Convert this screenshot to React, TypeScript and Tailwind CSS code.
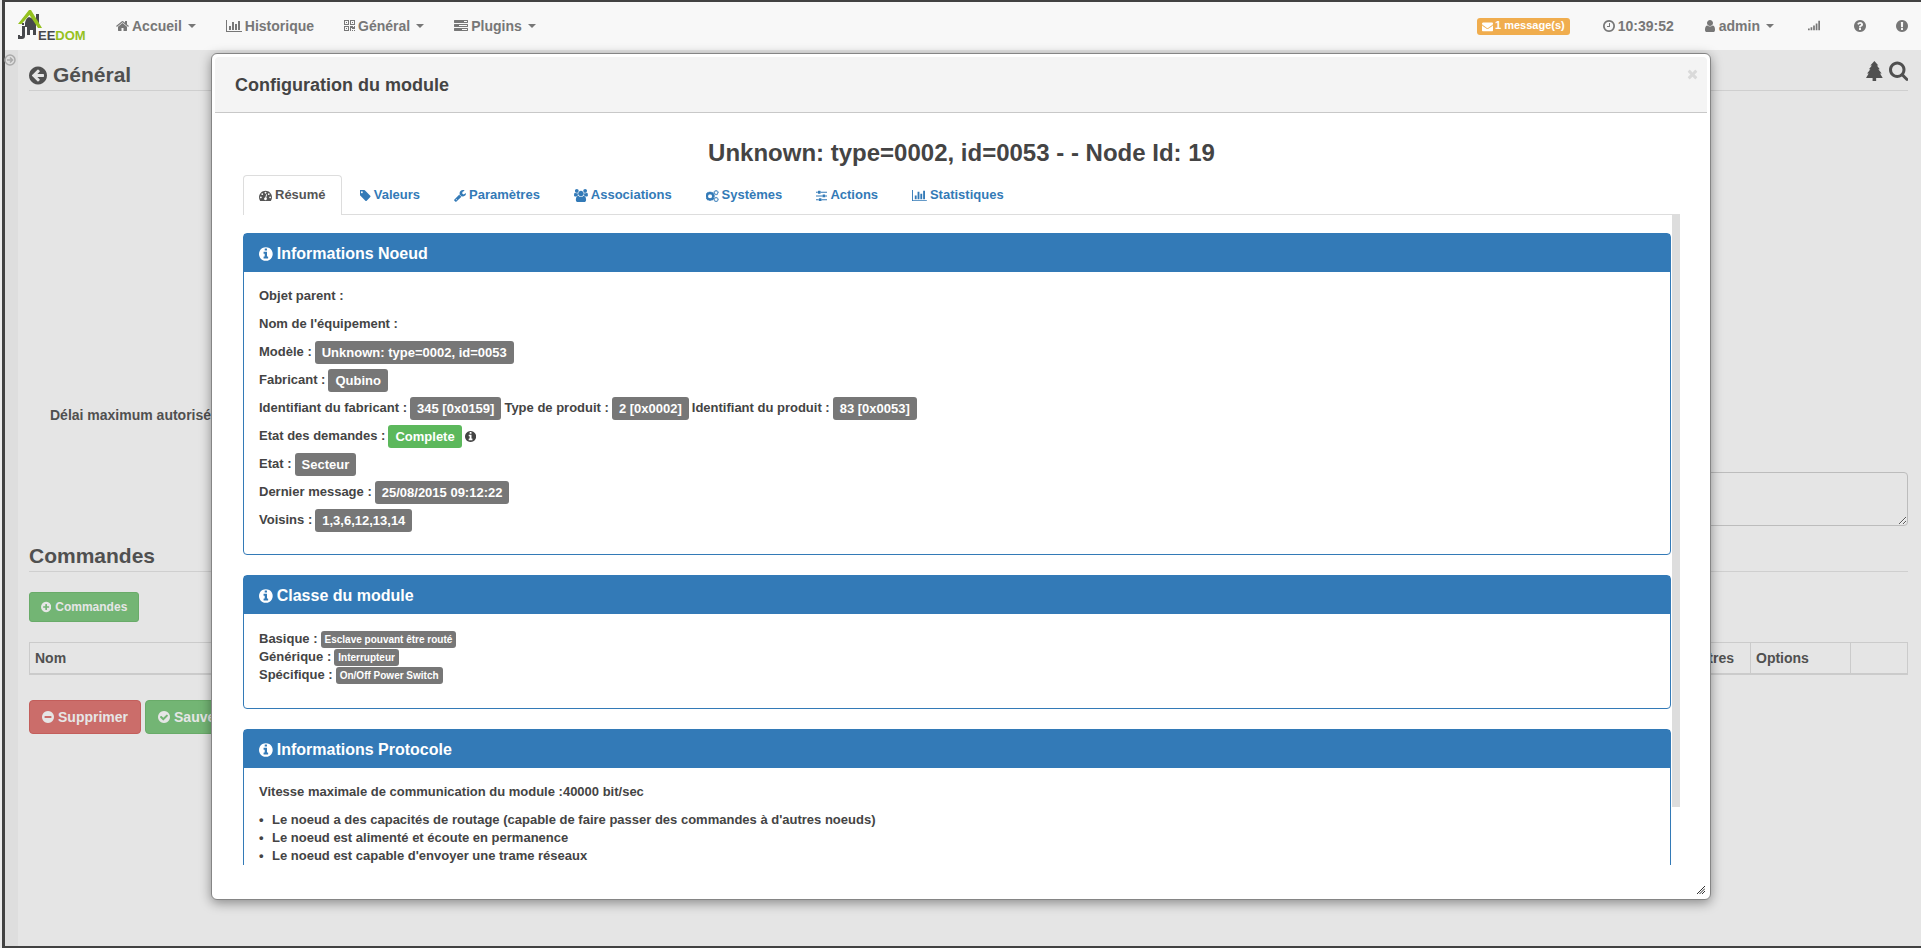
import type { ReactNode } from "react";

const DISC =
  "M1664 896q0 209-103 385.5t-279.5 279.5-385.5 103-385.5-103-279.5-279.5-103-385.5 103-385.5 279.5-279.5 385.5-103 385.5 103 279.5 279.5 103 385.5z";

type IconDef = { w: number; x?: number; d: string };

const ICONS = {
  home: { w: 1664, x: 64, d: "M1472 992v480q0 26-19 45t-45 19h-384v-384h-256v384h-384q-26 0-45-19t-19-45v-480q0-1 .5-3t.5-3l575-474 575 474q1 2 1 6zm223-69l-62 74q-8 9-21 11h-3q-13 0-21-7l-692-577-692 577q-12 8-24 7-13-2-21-11l-62-74q-8-10-7-23.5t11-21.5l719-599q32-26 76-26t76 26l244 204v-195q0-14 9-23t23-9h192q14 0 23 9t9 23v408l219 182q10 8 11 21.5t-7 23.5z" },
  chart: { w: 2048, d: "M640 896v512h-256v-512h256zm384-512v1024h-256v-1024h256zm1024 1152v128h-2048v-1536h128v1408h1920zm-640-896v768h-256v-768h256zm384-384v1152h-256v-1152h256z" },
  qrcode: { w: 1408, d: "M384 1152v128h-128v-128h128zm0-768v128h-128v-128h128zm768 0v128h-128v-128h128zm-1024 1023h384v-383h-384v383zm0-767h384v-384h-384v384zm768 0h384v-384h-384v384zm-256 256v640h-640v-640h640zm512 512v128h-128v-128h128zm256 0v128h-128v-128h128zm0-512v384h-384v-128h-128v384h-128v-640h384v128h128v-128h128zm-768-768v640h-640v-640h640zm768 0v640h-640v-640h640z" },
  tasks: { w: 1792, d: "M1024 1408h640v-128h-640v128zm-384-512h1024v-128h-1024v128zm640-512h384v-128h-384v128zm512 832v256q0 26-19 45t-45 19h-1664q-26 0-45-19t-19-45v-256q0-26 19-45t45-19h1664q26 0 45 19t19 45zm0-512v256q0 26-19 45t-45 19h-1664q-26 0-45-19t-19-45v-256q0-26 19-45t45-19h1664q26 0 45 19t19 45zm0-512v256q0 26-19 45t-45 19h-1664q-26 0-45-19t-19-45v-256q0-26 19-45t45-19h1664q26 0 45 19t19 45z" },
  envelope: { w: 1792, d: "M1792 710v794q0 66-47 113t-113 47h-1472q-66 0-113-47t-47-113v-794q44 49 101 87 362 246 497 345 57 42 92.5 65.5t94.5 48 110 24.5h2q51 0 110-24.5t94.5-48 92.5-65.5q170-123 498-345 57-39 100-87zm0-294q0 79-49 151t-122 123q-376 261-468 325-10 7-42.5 31t-54 38.5-52 32.5-57.5 27-50 9h-2q-23 0-50-9t-57.5-27-52-32.5-54-38.5-42.5-31q-91-64-262-182.5t-205-142.5q-62-42-117-115.5t-55-136.5q0-78 41.5-130t118.5-52h1472q65 0 112.5 47t47.5 113z" },
  clock: { w: 1536, x: 128, d: "M1024 544v448q0 14-9 23t-23 9h-320q-14 0-23-9t-9-23v-64q0-14 9-23t23-9h224v-352q0-14 9-23t23-9h64q14 0 23 9t9 23zm416 352q0-148-73-273t-198-198-273-73-273 73-198 198-73 273 73 273 198 198 273 73 273-73 198-198 73-273zm224 0q0 209-103 385.5t-279.5 279.5-385.5 103-385.5-103-279.5-279.5-103-385.5 103-385.5 279.5-279.5 385.5-103 385.5 103 279.5 279.5 103 385.5z" },
  user: { w: 1536, x: 128, d: "M1536 1399q0 109-62.5 187t-150.5 78h-854q-88 0-150.5-78t-62.5-187q0-85 8.5-160.5t31.5-152 58.5-131 94-89 134.5-34.5q131 128 313 128t313-128q76 0 134.5 34.5t94 89 58.5 131 31.5 152 8.5 160.5zm-256-887q0 159-112.5 271.5t-271.5 112.5-271.5-112.5-112.5-271.5 112.5-271.5 271.5-112.5 271.5 112.5 112.5 271.5z" },
  signal: { w: 1792, d: "M0 1280h256v256h-256zM384 1088h256v448h-256zM768 832h256v704h-256zM1152 512h256v1024h-256zM1536 128h256v1408h-256z" },
  question: { w: 1536, x: 128, d: "M1024 1376v-192q0-14-9-23t-23-9h-192q-14 0-23 9t-9 23v192q0 14 9 23t23 9h192q14 0 23-9t9-23zm256-672q0-88-55.5-163t-138.5-116-170-41q-243 0-371 213-15 24 8 42l132 100q7 6 19 6 16 0 25-12 53-68 86-92 34-24 86-24 48 0 85.5 26t37.5 59q0 38-20 61t-68 45q-63 28-115.5 86.5t-52.5 125.5v36q0 14 9 23t23 9h192q14 0 23-9t9-23q0-19 21.5-49.5t54.5-49.5q32-18 49-28.5t46-35 44.5-48 28-60.5 12.5-81z" + DISC },
  exclamation: { w: 1536, x: 128, d: "M1024 1375v-190q0-14-9-23.5t-22-9.5h-192q-13 0-23 10t-10 23v190q0 13 10 23t23 10h192q13 0 22-9.5t9-23.5zm-2-344l18-621q0-12-10-18-10-8-24-8h-220q-14 0-24 8-10 6-10 18l17 621q0 10 10 17.5t24 7.5h185q14 0 23.5-7.5t10.5-17.5z" + DISC },
  info: { w: 1536, x: 128, d: "M1152 1376v-160q0-14-9-23t-23-9h-96v-512q0-14-9-23t-23-9h-320q-14 0-23 9t-9 23v160q0 14 9 23t23 9h96v320h-96q-14 0-23 9t-9 23v160q0 14 9 23t23 9h448q14 0 23-9t9-23zm-128-896v-160q0-14-9-23t-23-9h-192q-14 0-23 9t-9 23v160q0 14 9 23t23 9h192q14 0 23-9t9-23z" + DISC },
  back: { w: 1536, x: 128, d: "M1408 960v-128q0-26-19-45t-45-19h-502l189-189q19-19 19-45t-19-45l-91-91q-18-18-45-18t-45 18l-362 362-91 91q-18 18-18 45t18 45l91 91 362 362q18 18 45 18t45-18l91-91q18-18 18-45t-18-45l-189-189h502q26 0 45-19t19-45z" + DISC },
  plus: { w: 1536, x: 128, d: "M1344 960v-128q0-26-19-45t-45-19h-256v-256q0-26-19-45t-45-19h-128q-26 0-45 19t-19 45v256h-256q-26 0-45 19t-19 45v128q0 26 19 45t45 19h256v256q0 26 19 45t45 19h128q26 0 45-19t19-45v-256h256q26 0 45-19t19-45z" + DISC },
  minus: { w: 1536, x: 128, d: "M1344 960v-128q0-26-19-45t-45-19h-768q-26 0-45 19t-19 45v128q0 26 19 45t45 19h768q26 0 45-19t19-45z" + DISC },
  check: { w: 1536, x: 128, d: "M1412 734q0-28-18-46l-91-90q-19-19-45-19t-45 19l-408 407-226-226q-19-19-45-19t-45 19l-91 90q-18 18-18 46 0 27 18 45l362 362q19 19 45 19 27 0 46-19l543-543q18-18 18-45z" + DISC },
  times: { w: 1408, x: 192, d: "M1490 1322q0 40-28 68l-136 136q-28 28-68 28t-68-28l-294-294-294 294q-28 28-68 28t-68-28l-136-136q-28-28-28-68t28-68l294-294-294-294q-28-28-28-68t28-68l136-136q28-28 68-28t68 28l294 294 294-294q28-28 68-28t68 28l136 136q28 28 28 68t-28 68l-294 294 294 294q28 28 28 68z" },
  search: { w: 1664, x: 64, d: "M1216 832q0-185-131.5-316.5t-316.5-131.5-316.5 131.5-131.5 316.5 131.5 316.5 316.5 131.5 316.5-131.5 131.5-316.5zm512 832q0 52-38 90t-90 38q-54 0-90-38l-343-342q-179 124-399 124-143 0-273.5-55.5t-225-150-150-225-55.5-273.5 55.5-273.5 150-225 225-150 273.5-55.5 273.5 55.5 225 150 150 225 55.5 273.5q0 220-124 399l343 343q37 37 37 90z" },
  tree: { w: 1500, d: "M750 0l360 400h-140l270 340h-130l290 380h-140l240 400h-590v272h-320v-272h-590l240-400h-140l290-380h-130l270-340h-140z" },
  gauge: { w: 1792, d: "M384 1152q0-53-37.5-90.5t-90.5-37.5-90.5 37.5-37.5 90.5 37.5 90.5 90.5 37.5 90.5-37.5 37.5-90.5zm192-448q0-53-37.5-90.5t-90.5-37.5-90.5 37.5-37.5 90.5 37.5 90.5 90.5 37.5 90.5-37.5 37.5-90.5zm428 481l101-382q6-26-7.5-48.5t-38.5-29.5-48 6.5-30 39.5l-101 382q-60 5-107 43.5t-63 98.5q-20 77 20 146t117 89 146-20 89-117q16-60-6-117t-72-91zm660-33q0-53-37.5-90.5t-90.5-37.5-90.5 37.5-37.5 90.5 37.5 90.5 90.5 37.5 90.5-37.5 37.5-90.5zm-640-640q0-53-37.5-90.5t-90.5-37.5-90.5 37.5-37.5 90.5 37.5 90.5 90.5 37.5 90.5-37.5 37.5-90.5zm448 192q0-53-37.5-90.5t-90.5-37.5-90.5 37.5-37.5 90.5 37.5 90.5 90.5 37.5 90.5-37.5 37.5-90.5zm320 448q0 261-141 483-19 29-54 29h-1402q-35 0-54-29-141-221-141-483 0-182 71-348t191-286 286-191 348-71 348 71 286 191 191 286 71 348z" },
  tag: { w: 1536, x: 192, d: "M576 448q0-53-37.5-90.5t-90.5-37.5-90.5 37.5-37.5 90.5 37.5 90.5 90.5 37.5 90.5-37.5 37.5-90.5zm1067 576q0 53-37 90l-491 492q-39 37-91 37-53 0-90-37l-715-716q-38-37-64.5-101t-26.5-117v-416q0-52 38-90t90-38h416q53 0 117 26.5t102 64.5l715 714q37 39 37 91z" },
  wrench: { w: 1664, x: 64, d: "M448 1472q0-26-19-45t-45-19-45 19-19 45 19 45 45 19 45-19 19-45zm644-420l-682 682q-37 37-90 37-52 0-91-37l-106-108q-38-36-38-90 0-53 38-91l681-681q39 98 114.5 173.5t173.5 114.5zm634-435q0 39-23 106-47 134-164.5 217.5t-258.5 83.5q-185 0-316.5-131.5t-131.5-316.5 131.5-316.5 316.5-131.5q58 0 121.5 16.5t107.5 46.5q16 11 16 28t-16 28l-293 169v224l193 107q5-3 79-48.5t135.5-81 70.5-35.5q15 0 23.5 10t8.5 25z" },
  users: { w: 1920, d: "M593 896q-162 5-265 128h-134q-82 0-138-40.5t-56-118.5q0-353 124-353 6 0 43.5 21t97.5 42.5 119 21.5q67 0 133-23-5 37-5 66 0 139 81 256zm1071 637q0 120-73 189.5t-194 69.5h-874q-121 0-194-69.5t-73-189.5q0-53 3.5-103.5t14-109 26.5-108.5 43-97.5 62-81 85.5-53.5 111.5-20q10 0 43 21.5t73 48 107 48 135 21.5 135-21.5 107-48 73-48 43-21.5q61 0 111.5 20t85.5 53.5 62 81 43 97.5 26.5 108.5 14 109 3.5 103.5zm-1024-1277q0 106-75 181t-181 75-181-75-75-181 75-181 181-75 181 75 75 181zm704 384q0 159-112.5 271.5t-271.5 112.5-271.5-112.5-112.5-271.5 112.5-271.5 271.5-112.5 271.5 112.5 112.5 271.5zm576 225q0 78-56 118.5t-138 40.5h-134q-103-123-265-128 81-117 81-256 0-29-5-66 66 23 133 23 59 0 119-21.5t97.5-42.5 43.5-21q124 0 124 353zm-128-609q0 106-75 181t-181 75-181-75-75-181 75-181 181-75 181 75 75 181z" },
  sliders: { w: 1536, d: "M352 1408v128h-352v-128h352zm352-128q26 0 45 19t19 45v256q0 26-19 45t-45 19h-256q-26 0-45-19t-19-45v-256q0-26 19-45t45-19h256zm160-384v128h-864v-128h864zm-640-512v128h-224v-128h224zm1312 1024v128h-736v-128h736zm-960-1152q26 0 45 19t19 45v256q0 26-19 45t-45 19h-256q-26 0-45-19t-19-45v-256q0-26 19-45t45-19h256zm640 512q26 0 45 19t19 45v256q0 26-19 45t-45 19h-256q-26 0-45-19t-19-45v-256q0-26 19-45t45-19h256zm320 128v128h-224v-128h224zm0-512v128h-864v-128h864z" },
} satisfies Record<string, IconDef>;

type IconName = keyof typeof ICONS;

function Icon({ name, className = "h-[14px]" }: { name: IconName; className?: string }) {
  const icon: IconDef = ICONS[name];
  return (
    <svg aria-hidden="true" viewBox={`${icon.x ?? 0} 0 ${icon.w} 1792`} className={`w-auto shrink-0 ${className}`} fill="currentColor" fillRule="evenodd">
      <path d={icon.d} />
    </svg>
  );
}

const GEAR =
  "M-1.4-8h2.8l.4 2.1 1.4.6 1.8-1.2 2 2-1.2 1.8.6 1.4 2.1.4v2.8l-2.1.4-.6 1.4 1.2 1.8-2 2-1.8-1.2-1.4.6-.4 2.1h-2.8l-.4-2.1-1.4-.6-1.8 1.2-2-2 1.2-1.8-.6-1.4-2.1-.4v-2.8l2.1-.4.6-1.4-1.2-1.8 2-2 1.800 1.200 1.400-.6z";

function Gears() {
  return (
    <svg aria-hidden="true" viewBox="0 0 30 28" className="h-3 w-auto shrink-0">
      <g fill="none" stroke="currentColor">
        <path d={GEAR} transform="translate(9.5 14)" strokeWidth="4.4" />
        <g strokeWidth="4">
          <path d={GEAR} transform="translate(23.5 6) scale(.58)" />
          <path d={GEAR} transform="translate(23.5 22) scale(.58)" />
        </g>
      </g>
    </svg>
  );
}

function Logo() {
  return (
    <svg viewBox="0 0 70 32" className="h-8 w-[70px]" role="img" aria-label="Jeedom">
      <path d="M18 4h3v9h-3z" fill="#47484c" />
      <path d="M11 7q4 1 7 6v12h-3v-5h-3v5h-3v-8h-2v-4q1-5 4-6z" fill="#47484c" />
      <path d="M4 13h2v2h-2zM4 16h3v10q0 3-3 3h-4v-4h2v1h2z" fill="#47484c" />
      <path d="M11 0h2l11 18h-4l-8.500-13-8 9h-3.500z" fill="#95c11f" />
      <text x="20" y="30" fontSize="13" fontWeight="700" fontFamily="'Liberation Sans', Arial, sans-serif">
        <tspan fill="#47484c">EE</tspan>
        <tspan fill="#95c11f">DOM</tspan>
      </text>
    </svg>
  );
}

function Caret() {
  return <span className="ml-1.5 border-x-4 border-t-4 border-x-transparent border-t-current" />;
}

function NavItem({ icon, label, caret }: { icon: IconName; label: string; caret?: boolean }) {
  return (
    <a href="#" className="flex h-full items-center px-[15px]">
      <Icon name={icon} />
      <span className="ml-[3px]">{label}</span>
      {caret && <Caret />}
    </a>
  );
}

function Badge({ children, small, green }: { children: ReactNode; small?: boolean; green?: boolean }) {
  const size = small ? "h-[17px] px-1 text-[10px] leading-[17px]" : "h-[23px] px-[7px] leading-[23px]";
  return <span className={`inline-block rounded-[3px] text-white ${size} ${green ? "bg-[#5cb85c]" : "bg-[#777]"}`}>{children}</span>;
}

function Row({ children }: { children: ReactNode }) {
  return <div className="flex h-7 items-center gap-[3px]">{children}</div>;
}

function ClassRow({ label, value }: { label: string; value: string }) {
  return (
    <div className="flex h-[18px] items-center gap-[3px]">
      <span>{label}</span>
      <Badge small>{value}</Badge>
    </div>
  );
}

function Panel({ title, children, body }: { title: string; children: ReactNode; body: string }) {
  return (
    <section className="mb-5 rounded-[4px] border border-[#337ab7] bg-white">
      <h3 className="flex h-[38px] items-center gap-1 bg-[#337ab7] px-[15px] pt-px text-base text-white">
        <Icon name="info" className="h-4" />
        {title}
      </h3>
      <div className={`px-[15px] ${body}`}>{children}</div>
    </section>
  );
}

const TABS: { label: string; icon: IconName | "gears" }[] = [
  { label: "Résumé", icon: "gauge" },
  { label: "Valeurs", icon: "tag" },
  { label: "Paramètres", icon: "wrench" },
  { label: "Associations", icon: "users" },
  { label: "Systèmes", icon: "gears" },
  { label: "Actions", icon: "sliders" },
  { label: "Statistiques", icon: "chart" },
];

const CAPABILITIES = [
  "Le noeud a des capacités de routage (capable de faire passer des commandes à d'autres noeuds)",
  "Le noeud est alimenté et écoute en permanence",
  "Le noeud est capable d'envoyer une trame réseaux",
];

function Modal() {
  return (
    <div role="dialog" aria-labelledby="dialog-title" className="absolute top-[51px] right-[210px] bottom-[46px] left-[206px] flex flex-col rounded-md border border-[#858585] bg-white p-[3px] text-[13px] text-[#444] shadow-[0_3px_12px_rgba(0,0,0,0.4)]">
      <header className="flex h-14 shrink-0 items-center justify-between rounded-t border-b border-[#c8c8c8] bg-[#f4f4f4] px-5">
        <h1 id="dialog-title" className="text-lg">Configuration du module</h1>
        <button type="button" aria-label="Fermer" className="-mr-[11px] mb-[22px] text-[#dadada]">
          <Icon name="times" />
        </button>
      </header>
      <div className="flex min-h-0 flex-1 flex-col pt-6 pr-[27px] pb-[31px] pl-7">
        <h2 className="text-center text-2xl leading-8">Unknown: type=0002, id=0053 - - Node Id: 19</h2>
        <ul role="tablist" className="mt-1.5 flex shrink-0 gap-0.5 border-b border-[#ddd]">
          {TABS.map((tab, i) => (
            <li key={tab.label} role="presentation">
              <button
                type="button"
                role="tab"
                aria-selected={i === 0}
                className={
                  i === 0
                    ? "-mb-px flex h-10 items-center gap-[3px] rounded-t-[4px] border border-b-0 border-[#ddd] bg-white px-[15px] text-[#555]"
                    : "flex h-[39px] items-center gap-[3px] px-4 pt-0.5 text-[#337ab7]"
                }
              >
                {tab.icon === "gears" ? <Gears /> : <Icon name={tab.icon} className="h-[13px]" />}
                {tab.label}
              </button>
            </li>
          ))}
        </ul>
        <div className="relative min-h-0 flex-1 overflow-hidden pt-[18px] pr-[9px]">
          <Panel title="Informations Noeud" body="pt-2.5 pb-5">
            <Row>Objet parent :</Row>
            <Row>Nom de l'équipement :</Row>
            <Row>
              Modèle : <Badge>Unknown: type=0002, id=0053</Badge>
            </Row>
            <Row>
              Fabricant : <Badge>Qubino</Badge>
            </Row>
            <Row>
              Identifiant du fabricant : <Badge>345 [0x0159]</Badge> Type de produit : <Badge>2 [0x0002]</Badge> Identifiant du produit : <Badge>83 [0x0053]</Badge>
            </Row>
            <Row>
              Etat des demandes : <Badge green>Complete</Badge> <Icon name="info" className="h-[13px]" />
            </Row>
            <Row>
              Etat : <Badge>Secteur</Badge>
            </Row>
            <Row>
              Dernier message : <Badge>25/08/2015 09:12:22</Badge>
            </Row>
            <Row>
              Voisins : <Badge>1,3,6,12,13,14</Badge>
            </Row>
          </Panel>
          <Panel title="Classe du module" body="pt-4 pb-6">
            <ClassRow label="Basique :" value="Esclave pouvant être routé" />
            <ClassRow label="Générique :" value="Interrupteur" />
            <ClassRow label="Spécifique :" value="On/Off Power Switch" />
          </Panel>
          <Panel title="Informations Protocole" body="pt-[15px] pb-6">
            <p className="mb-2.5 leading-[18px]">Vitesse maximale de communication du module :40000 bit/sec</p>
            <ul className="leading-[18px]">
              {CAPABILITIES.map((text) => (
                <li key={text} className="flex before:w-[13px] before:content-['•']">
                  {text}
                </li>
              ))}
            </ul>
          </Panel>
          <div className="absolute top-0 right-0 h-[592px] w-2 bg-[#ddd]" />
        </div>
      </div>
      <svg aria-hidden="true" viewBox="0 0 8 8" className="absolute right-[5px] bottom-[5px] size-2" stroke="#333" strokeWidth="1">
        <path d="M0 8L8 0M2.500 8L8 2.500M5 8L8 5" />
      </svg>
    </div>
  );
}

export default function App() {
  return (
    <div className="flex min-h-screen bg-[#ececec] pl-[2px] font-['Liberation_Sans',Arial,sans-serif] text-sm font-bold">
      <div className="relative flex flex-1 flex-col border-y-2 border-l-[3px] border-[#424242]">
        <nav className="flex h-12 shrink-0 items-center justify-between bg-[#f8f8f8] px-[13px] text-[#777]">
          <div className="flex h-full items-center">
            <a href="#" className="mr-[13px]">
              <Logo />
            </a>
            <NavItem icon="home" label="Accueil" caret />
            <NavItem icon="chart" label="Historique" />
            <NavItem icon="qrcode" label="Général" caret />
            <NavItem icon="tasks" label="Plugins" caret />
          </div>
          <div className="flex h-full items-center">
            <a href="#" className="mr-[18px] flex h-[17px] items-center gap-0.5 rounded-[3px] bg-[#f0ad4e] px-[5px] text-[11px] text-white">
              <Icon name="envelope" className="h-[11px]" />1 message(s)
            </a>
            <NavItem icon="clock" label="10:39:52" />
            <NavItem icon="user" label="admin" caret />
            <div className="flex h-full items-center gap-[30px] pl-[19px]">
              <a href="#" aria-label="Réseau" className="mr-1"><Icon name="signal" className="h-3" /></a>
              <a href="#" aria-label="Aide"><Icon name="question" /></a>
              <a href="#" aria-label="Alertes"><Icon name="exclamation" /></a>
            </div>
          </div>
        </nav>
        <div className="flex flex-1 bg-[#e5e5e5] text-[#505050]">
          <aside className="w-[13px] shrink-0 bg-[#dedede] pt-1">
            <button type="button" aria-label="Ouvrir le menu" className="block text-[#aaa]">
              <svg viewBox="0 0 12 12" className="-ml-px size-3" fill="none" stroke="currentColor" strokeWidth="1.500">
                <circle cx="6" cy="6" r="5" />
                <path d="M3 6h5M6 3.500L8.500 6 6 8.500" />
              </svg>
            </button>
          </aside>
          <main className="flex min-w-0 flex-1 flex-col pr-[13px] pl-[11px]">
            <div className="flex h-[41px] items-center justify-between border-b border-[#cfcfcf]">
              <h2 className="flex items-center gap-1.5 pt-2.5 text-[21px]">
                <Icon name="back" className="h-[21px]" />
                Général
              </h2>
              <div className="flex items-center gap-1.5 pt-px">
                <button type="button" aria-label="Arborescence"><Icon name="tree" className="h-5" /></button>
                <button type="button" aria-label="Rechercher"><Icon name="search" className="h-[21px]" /></button>
              </div>
            </div>
            <form className="flex flex-col pt-[313px]">
              <label htmlFor="comment" className="pl-[21px] leading-[22px]">Délai maximum autorisé</label>
              <textarea id="comment" className="mt-[46px] ml-auto h-[54px] w-1/2 rounded-[4px] border border-[#bcbcbc] bg-transparent" />
            </form>
            <h2 className="mt-[15px] h-[31px] border-b border-[#cfcfcf] text-[21px] leading-[29px]">Commandes</h2>
            <div className="mt-5">
              <button type="button" className="flex h-[30px] items-center gap-1 rounded-[3px] border border-[#69ab69] bg-[#73b574] px-[11px] text-xs text-[#e6e6e6]">
                <Icon name="plus" className="h-3" />
                Commandes
              </button>
            </div>
            <table className="mt-5 w-full border-collapse text-left">
              <thead>
                <tr className="h-[31px] border border-b-2 border-[#cbcbcb]">
                  <th className="px-[5px]">Nom</th>
                  <th className="border-r border-[#cbcbcb] px-4 text-right">Paramètres</th>
                  <th className="w-[100px] border-r border-[#cbcbcb] px-[5px]">Options</th>
                  <td className="w-[57px]" />
                </tr>
              </thead>
            </table>
            <div className="mt-[25px] flex gap-1 text-[#e6e6e6]">
              <button type="button" className="flex h-[34px] items-center gap-1 rounded-[4px] border border-[#c35e5b] bg-[#cb6d6a] px-3">
                <Icon name="minus" />
                Supprimer
              </button>
              <button type="button" className="flex h-[34px] items-center gap-1 rounded-[4px] border border-[#69ab69] bg-[#73b574] px-3">
                <Icon name="check" />
                Sauvegarder
              </button>
            </div>
          </main>
        </div>
        <Modal />
      </div>
    </div>
  );
}
